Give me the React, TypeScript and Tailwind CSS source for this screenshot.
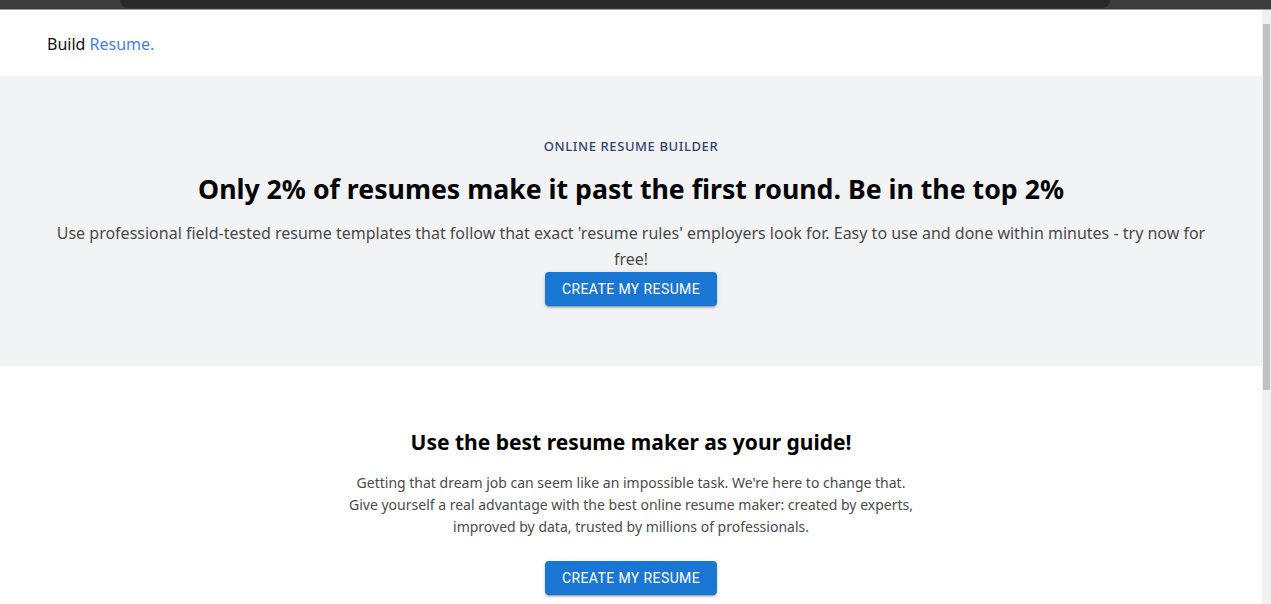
import React from "react";

const sans = "font-['Noto_Sans','Open_Sans',sans-serif]";

const CreateButton = () => (
  <button className="h-[34px] px-[17px] rounded bg-[#1976d2] text-white text-[14px] font-normal uppercase tracking-[0.4px] shadow-[0_3px_1px_-2px_rgba(0,0,0,0.2),0_2px_2px_0_rgba(0,0,0,0.14),0_1px_5px_0_rgba(0,0,0,0.12)] font-['Roboto',sans-serif]">
    Create my resume
  </button>
);

export default function App() {
  return (
    <div className={`h-[604px] overflow-hidden flex flex-col bg-white ${sans}`}>
      {/* browser chrome remnant */}
      <div className="h-[10px] shrink-0 bg-[#3c3c3c] border-b border-[#9a9a9a] flex">
        <div className="ml-[120px] w-[990px] h-[8px] bg-[#2a2a2a] rounded-b-[8px]" />
      </div>

      <div className="flex-1 flex min-h-0">
        <main className="flex-1 flex flex-col">
          <header className="h-[66px] flex items-center px-[47px] pt-[2px]">
            <span className="text-[16px] text-[#111]">
              Build <span className="text-[#4a7fe8]">Resume.</span>
            </span>
          </header>

          <section className="bg-[#f2f3f5] pt-[61px] pb-[60px]">
            <div className="max-w-6xl mx-auto flex flex-col items-center text-center">
              <p className="text-[13px] leading-[18px] tracking-[0.6px] text-[#334377] font-medium">
                ONLINE RESUME BUILDER
              </p>
              <h1 className="mt-[16px] text-[26.7px] font-bold text-black leading-[36px]">
                Only 2% of resumes make it past the first round. Be in the top 2%
              </h1>
              <p className="mt-[13px] text-[16px] leading-[26px] text-[#4b4b4b]">
                Use professional field-tested resume templates that follow that exact 'resume rules' employers look for. Easy to use and done within minutes - try now for free!
              </p>
              <CreateButton />
            </div>
          </section>

          <section className="pt-[61px] flex flex-col items-center text-center">
            <h2 className="text-[21px] font-bold text-black leading-[30px]">
              Use the best resume maker as your guide!
            </h2>
            <p className="mt-[15px] max-w-[580px] text-[14px] leading-[22px] text-[#4b4b4b]">
              Getting that dream job can seem like an impossible task. We're here to change that. Give yourself a real advantage with the best online resume maker: created by experts, improved by data, trusted by millions of professionals.
            </p>
            <div className="mt-[23px]">
              <CreateButton />
            </div>
          </section>
        </main>

        {/* scrollbar */}
        <div className="w-[9px] shrink-0 bg-[#f1f1f1] flex flex-col items-center pt-[14px]">
          <div className="w-[7px] h-[366px] bg-[#c1c1c1]" />
        </div>
      </div>
    </div>
  );
}
